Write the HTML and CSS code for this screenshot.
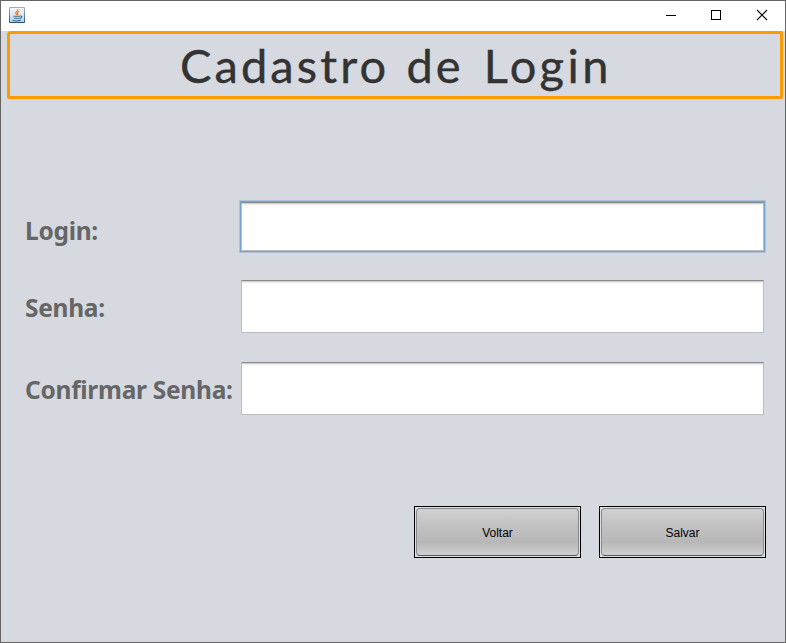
FILE: index.html
```html
<!DOCTYPE html>
<html lang="pt-BR">
<head>
<meta charset="utf-8">
<title>Cadastro de Login</title>
<link rel="stylesheet" href="styles.css">
</head>
<body>
<div class="window">
  <header class="titlebar">
    <svg class="app-icon" width="16" height="16" viewBox="0 0 16 16">
      <defs><linearGradient id="tile" x1="0" y1="0" x2="0" y2="1"><stop offset="0" stop-color="#9fb0bd"/><stop offset=".5" stop-color="#6787a0"/><stop offset="1" stop-color="#234f73"/></linearGradient>
      <linearGradient id="face" x1="0" y1="0" x2="0" y2="1"><stop offset="0" stop-color="#f6f7f8"/><stop offset="1" stop-color="#c3d1db"/></linearGradient></defs>
      <rect width="16" height="16" rx="1" fill="url(#tile)"/>
      <rect x="1" y="1" width="14" height="14" fill="url(#face)"/>
      <path d="M9 2c.6 2-2.8 2.400-2.300 4 .2.800 1 1 1 2M10 4.500c-1.800.8-2 1.500-1.300 2.300.4.500.2.900-.3 1.400" fill="none" stroke="#e8772e" stroke-width="1.100"/>
      <path d="M4.500 9.300h6.500M5 11.200h5.300M3.500 13.200c2 .8 6 .8 8.500-.1M11 9c2.500-.5 2.300 2-.3 2.400" fill="none" stroke="#3f6c91" stroke-width="1.100"/>
    </svg>
    <div class="controls">
      <svg width="46" height="30" viewBox="0 0 46 30"><path d="M11 15.500h10" stroke="#000"/></svg>
      <svg width="46" height="30" viewBox="0 0 46 30"><rect x="10.500" y="10.500" width="9" height="9" fill="none" stroke="#000"/></svg>
      <svg width="30" height="30" viewBox="0 0 30 30"><path d="M10 10l10 10M20 10L10 20" stroke="#000" stroke-width="1.100"/></svg>
    </div>
  </header>
  <main>
    <h1><span>Cadastro</span> <span class="word-de">de</span> <span class="word-login">Login</span></h1>
    <form>
      <div class="row focused"><label for="login">Login:</label><input id="login" type="text"></div>
      <div class="row"><label for="senha">Senha:</label><input id="senha" type="password"></div>
      <div class="row"><label for="confirmar">Confirmar Senha:</label><input id="confirmar" type="password"></div>
      <div class="actions">
        <button type="button"><span>Voltar</span></button>
        <button type="button"><span>Salvar</span></button>
      </div>
    </form>
  </main>
</div>
</body>
</html>
```
FILE: styles.css
```css
* { box-sizing: border-box; }
body { margin: 0; }
.window {
  width: 786px;
  height: 643px;
  border: 1px solid #656565;
  background: #d6d9e0;
  overflow: hidden;
}
.titlebar {
  display: flex;
  justify-content: space-between;
  height: 30px;
  padding-left: 8px;
  background: #fff;
}
.app-icon { margin-top: 6px; }
.controls { display: flex; padding-right: 8px; margin-top: -1px; }
.controls svg { display: block; }
h1 {
  width: 776px;
  height: 68px;
  margin: 0 0 0 6px;
  padding-left: 170px;
  border: 3px solid #ff9900;
  border-radius: 4px 2px 2px 2px;
  color: #333;
  font: 400 47px/62px Lato, sans-serif;
  letter-spacing: 3.100px;
  -webkit-text-stroke: 0.4px #333;
  white-space: nowrap;
}
.word-de { margin-left: 2px; }
.word-login { margin-left: 5px; letter-spacing: 3.400px; }
.row {
  display: grid;
  grid-template-columns: 216px 523px;
  grid-template-rows: 100%;
  height: 53px;
  margin: 0 0 29px 24px;
}
form { padding-top: 103px; }
.row.focused { height: 49px; }
label {
  color: #666;
  font: bold 24.500px/56px "Noto Sans", sans-serif;
  letter-spacing: -0.280px;
  white-space: nowrap;
}
.focused label { line-height: 58px; }
input {
  width: 523px;
  height: 100%;
  padding: 0 8px;
  border: 1px solid #bcbcbc;
  border-top-color: #8b8b8b;
  border-radius: 0;
  outline: none;
  background: linear-gradient(#cfcfcf 0 1px, #eee 1px 2px, #fafafa 2px 3px, #fff 3px);
}
.focused input { box-shadow: 0 0 0 1px #73a4d1, 0 0 0 2px #a9c5e1; }
.actions {
  display: flex;
  gap: 18px;
  margin: 91px 0 0 413px;
}
button {
  width: 167px;
  height: 52px;
  padding: 1px;
  border: 1px solid #000;
  background: #dde0e0;
  color: #000;
  font: 12px "Liberation Sans", Arial, sans-serif;
}
button span {
  display: flex;
  align-items: center;
  justify-content: center;
  height: 48px;
  padding-top: 2px;
  border: 1px solid #858990;
  border-bottom-color: #555960;
  border-radius: 4px;
  background: linear-gradient(#d1d1d1, #c1c1c1 38%, #b7b7b7 72%, #d0d0d0);
}
```
